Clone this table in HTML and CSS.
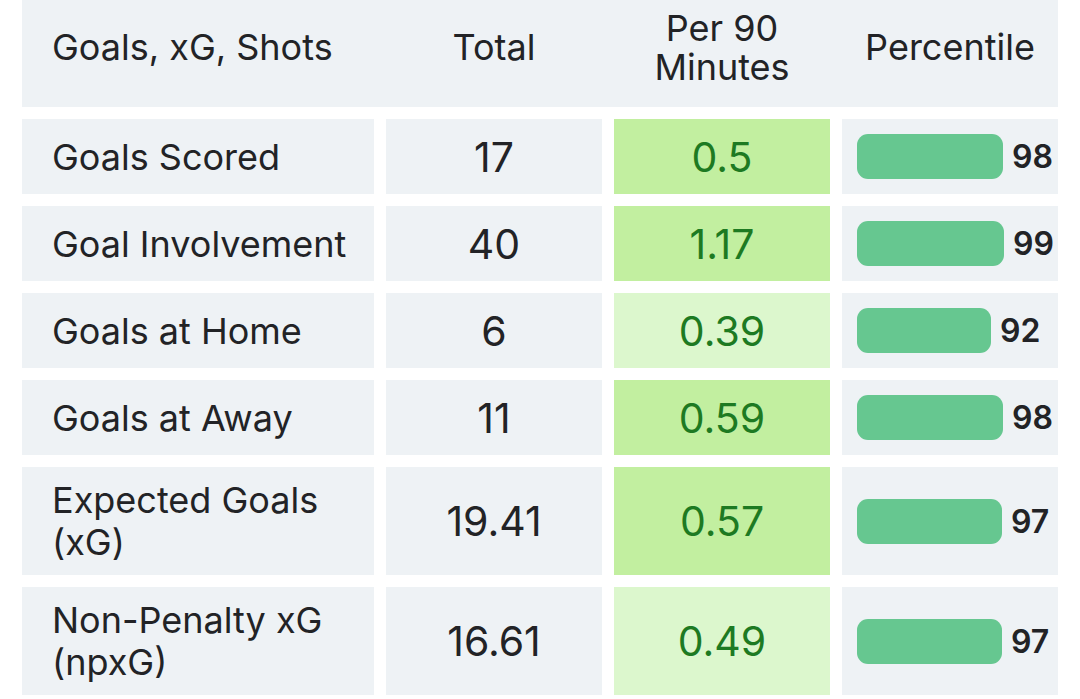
FILE: index.html
```html
<!DOCTYPE html>
<html lang="en">
<head>
<meta charset="utf-8">
<title>Goals, xG, Shots</title>
<link rel="stylesheet" href="styles.css">
</head>
<body>
<div class="table">
  <div class="head">
    <div class="hcell hlabel">Goals, xG, Shots</div>
    <div class="hcell">Total</div>
    <div class="hcell">Per 90 Minutes</div>
    <div class="hcell">Percentile</div>
  </div>

  <div class="row">
    <div class="cell label">Goals Scored</div>
    <div class="cell num">17</div>
    <div class="cell per strong">0.5</div>
    <div class="cell pct"><span class="bar" style="width:146px"></span><span class="pv">98</span></div>
  </div>
  <div class="row">
    <div class="cell label">Goal Involvement</div>
    <div class="cell num">40</div>
    <div class="cell per strong">1.17</div>
    <div class="cell pct"><span class="bar" style="width:147px"></span><span class="pv">99</span></div>
  </div>
  <div class="row">
    <div class="cell label">Goals at Home</div>
    <div class="cell num">6</div>
    <div class="cell per light">0.39</div>
    <div class="cell pct"><span class="bar" style="width:134px"></span><span class="pv">92</span></div>
  </div>
  <div class="row">
    <div class="cell label">Goals at Away</div>
    <div class="cell num">11</div>
    <div class="cell per strong">0.59</div>
    <div class="cell pct"><span class="bar" style="width:146px"></span><span class="pv">98</span></div>
  </div>
  <div class="row tall">
    <div class="cell label">Expected Goals (xG)</div>
    <div class="cell num">19.41</div>
    <div class="cell per strong">0.57</div>
    <div class="cell pct"><span class="bar" style="width:145px"></span><span class="pv">97</span></div>
  </div>
  <div class="row tall">
    <div class="cell label">Non-Penalty xG (npxG)</div>
    <div class="cell num">16.61</div>
    <div class="cell per light">0.49</div>
    <div class="cell pct"><span class="bar" style="width:145px"></span><span class="pv">97</span></div>
  </div>
</div>
</body>
</html>
```

FILE: styles.css
```css
* { box-sizing: border-box; }

html, body {
  margin: 0;
  padding: 0;
  background: #ffffff;
}

body {
  font-family: Inter, "Noto Sans", "Liberation Sans", sans-serif;
  color: #222326;
  padding-left: 22px;
}

.table {
  width: 1036px;
  display: flex;
  flex-direction: column;
  gap: 12px;
}

.head,
.row {
  display: grid;
  grid-template-columns: 352px 216px 216px 216px;
  column-gap: 12px;
}

.head {
  height: 107px;
  background: #eef2f5;
  padding-bottom: 12px;
  align-items: center;
}

.hcell {
  font-size: 36px;
  line-height: 39px;
  text-align: center;
  padding: 0 12px;
}

.hcell.hlabel {
  text-align: left;
  padding-left: 30px;
}

.row { height: 75px; }
.row.tall { height: 108px; }

.cell {
  background: #eef2f5;
  display: flex;
  align-items: center;
}

.label {
  font-size: 36px;
  line-height: 42px;
  padding: 0 14px 0 30px;
}

.num {
  justify-content: center;
  font-size: 41px;
}

.per {
  justify-content: center;
  font-size: 41px;
  color: #1d7a22;
}

.per.strong { background: #c2efa0; }
.per.light { background: #dcf7cd; }

.pct {
  padding-left: 15px;
  gap: 9px;
}

.bar {
  display: block;
  height: 45px;
  border-radius: 11px;
  background: #66c790;
}

.pv {
  font-size: 32px;
  font-weight: 600;
}
```
